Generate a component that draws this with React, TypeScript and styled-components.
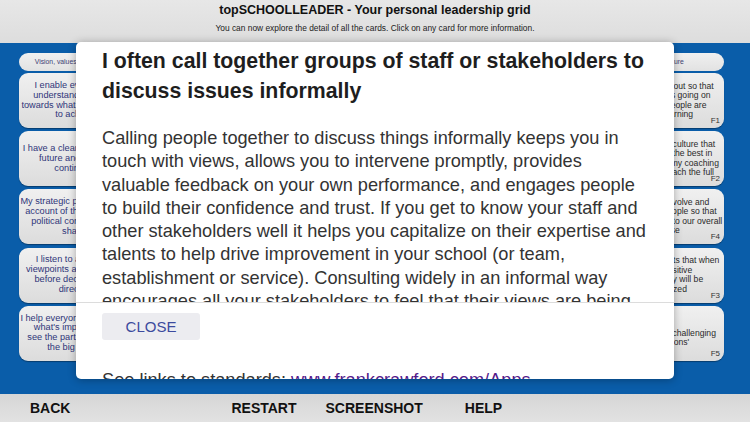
import React from "react"
import styled, { createGlobalStyle } from "styled-components"

type Card = { lines: string[]; code: string }
type Column = { title: string; align: "center" | "left"; cards: Card[] }

const columns: Column[] = [
  {
    title: "Vision, values and direction",
    align: "center",
    cards: [
      { code: "A1", lines: ["I enable everyone to", "understand and work", "towards what we are trying", "to achieve"] },
      { code: "A2", lines: ["I have a clear vision of the", "future and share it", "continually"] },
      { code: "A3", lines: ["My strategic planning takes", "account of the social and", "political context and is", "shared"] },
      { code: "A4", lines: ["I listen to a range of", "viewpoints and evidence", "before deciding on a", "direction"] },
      { code: "A5", lines: ["I help everyone understand", "what's important and", "see the part they play in", "the big picture"] },
    ],
  },
  {
    title: "Teaching and learning",
    align: "center",
    cards: [
      { code: "B1", lines: ["I keep learning at the", "heart of everything", "we do"] },
      { code: "B2", lines: ["I monitor the quality of", "teaching and give", "useful feedback"] },
      { code: "B3", lines: ["I use data to track", "progress and plan", "improvement"] },
      { code: "B4", lines: ["I model the behaviour", "I expect from others"] },
      { code: "B5", lines: ["I make time to visit", "classrooms and talk", "with learners"] },
    ],
  },
  {
    title: "Leading people",
    align: "center",
    cards: [
      { code: "C1", lines: ["I delegate clearly and", "trust people to get", "on with the job"] },
      { code: "C2", lines: ["I often call together", "groups of staff to", "discuss issues"] },
      { code: "C3", lines: ["I give praise and", "recognition where", "it is due"] },
      { code: "C4", lines: ["I deal with under-", "performance promptly", "and fairly"] },
      { code: "C5", lines: ["I build teams that", "work well together"] },
    ],
  },
  {
    title: "Managing the organisation",
    align: "center",
    cards: [
      { code: "D1", lines: ["I manage resources", "efficiently and", "effectively"] },
      { code: "D2", lines: ["I make sure systems", "and routines run", "smoothly"] },
      { code: "D3", lines: ["I plan ahead and", "anticipate problems"] },
      { code: "D4", lines: ["I keep the budget", "under close review"] },
      { code: "D5", lines: ["I make sure policies", "are understood and", "followed"] },
    ],
  },
  {
    title: "Working with others",
    align: "center",
    cards: [
      { code: "E1", lines: ["I work closely with", "parents and the", "community"] },
      { code: "E2", lines: ["I build strong links", "with other schools"] },
      { code: "E3", lines: ["I keep governors well", "informed"] },
      { code: "E4", lines: ["I represent the school", "positively in public"] },
      { code: "E5", lines: ["I seek out partners", "who can help us", "improve"] },
    ],
  },
  {
    title: "Our culture",
    align: "left",
    cards: [
      { code: "F1", lines: ["I get out and about so that", "I can see what's going on", "and how well people are", "working and learning"] },
      { code: "F2", lines: ["I build a strong culture that", "truly brings out the best in", "everyone, and my coaching", "helps staff to reach the full"] },
      { code: "F4", lines: ["I consistently involve and", "engage with people so that", "they contribute to our overall", "sense of purpose"] },
      { code: "F3", lines: ["I set clear targets that when", "they make a positive", "contribution they will be", "publicly recognized"] },
      { code: "F5", lines: ["I encourage", "staff to take on challenging", "ask 'hard questions'"] },
    ],
  },
]

const tools = [
  { label: "BACK", offset: 0 },
  { label: "RESTART", offset: 161 },
  { label: "SCREENSHOT", offset: 29 },
  { label: "HELP", offset: 42 },
]

const App = (): JSX.Element => {
  return (
    <>
      <GlobalStyle />
      <Screen>
        <Header>
          <AppTitle>topSCHOOLLEADER - Your personal leadership grid</AppTitle>
          <Hint>You can now explore the detail of all the cards. Click on any card for more information.</Hint>
        </Header>

        <Board>
          {columns.map((col) => (
            <CardColumn key={col.title}>
              <Pill>{col.title}</Pill>
              {col.cards.map((card) => (
                <CardBox key={card.code} $align={col.align}>
                  <CardText $align={col.align}>
                    {card.lines.map((line, i) => (
                      <React.Fragment key={i}>
                        {line}
                        {i < card.lines.length - 1 && <br />}
                      </React.Fragment>
                    ))}
                  </CardText>
                  <CardCode>{card.code}</CardCode>
                </CardBox>
              ))}
            </CardColumn>
          ))}
        </Board>

        <Toolbar>
          {tools.map((t) => (
            <ToolButton key={t.label} type="button" $offset={t.offset}>
              {t.label}
            </ToolButton>
          ))}
        </Toolbar>

        <Modal>
          <ModalScroll>
            <ModalTitle>I often call together groups of staff or stakeholders to discuss issues informally</ModalTitle>
            <ModalBody>
              Calling people together to discuss things informally keeps you in touch with views, allows
              you to intervene promptly, provides valuable feedback on your own performance, and engages
              people to build their confidence and trust. If you get to know your staff and other
              stakeholders well it helps you capitalize on their expertise and talents to help drive
              improvement in your school (or team, establishment or service). Consulting widely in an
              informal way encourages all your stakeholders to feel that their views are being
              listened to and valued.
            </ModalBody>
            <Links>
              See links to standards: <a href="#apps">www.frankcrawford.com/Apps</a>
            </Links>
          </ModalScroll>
          <ModalFooter>
            <CloseButton type="button">CLOSE</CloseButton>
          </ModalFooter>
        </Modal>
      </Screen>
    </>
  )
}

const GlobalStyle = createGlobalStyle`
  html, body {
    margin: 0;
    padding: 0;
  }
  body {
    font-family: "Liberation Sans", Arial, Helvetica, sans-serif;
    background: #0a5da9;
  }
`

const Screen = styled.div`
  position: relative;
  width: 750px;
  height: 422px;
  display: flex;
  flex-direction: column;
  overflow: hidden;
`

const Header = styled.header`
  height: 43px;
  flex-shrink: 0;
  display: flex;
  flex-direction: column;
  align-items: center;
  padding-top: 3px;
  box-sizing: border-box;
  background: linear-gradient(#e7e7e7, #dddddd);
`

const AppTitle = styled.h1`
  margin: 0;
  font-size: 12.5px;
  line-height: 15px;
  font-weight: 700;
  color: #111;
`

const Hint = styled.p`
  margin: 5px 0 0;
  font-size: 8.4px;
  line-height: 10px;
  color: #222;
`

const Board = styled.main`
  flex: 1;
  display: grid;
  grid-template-columns: repeat(6, minmax(0, 1fr));
  column-gap: 4px;
  align-content: start;
  padding: 10px 26px 0 19px;
  background: #0a5da9;
`

const CardColumn = styled.div`
  display: flex;
  flex-direction: column;
  gap: 3.2px;
  min-width: 0;
`

const Pill = styled.div`
  height: 17.5px;
  margin-bottom: -0.7px;
  border-radius: 9px;
  background: linear-gradient(#f0f0f0, #e2e2e2);
  display: flex;
  align-items: center;
  justify-content: center;
  font-size: 6.8px;
  color: #3e4274;
  white-space: nowrap;
  overflow: hidden;
`

const CardBox = styled.div<{ $align: "center" | "left" }>`
  position: relative;
  height: 55px;
  border-radius: 9px;
  background: linear-gradient(#f0f0f0, #dcdcdc);
  box-shadow: 0 1px 1px rgba(0, 0, 0, 0.35);
  display: flex;
  align-items: center;
  justify-content: ${(p) => (p.$align === "center" ? "center" : "flex-start")};
  padding: 0 4px;
  overflow: hidden;
`

const CardText = styled.p<{ $align: "center" | "left" }>`
  margin: 0;
  font-size: ${(p) => (p.$align === "center" ? "9.2px" : "8.6px")};
  line-height: ${(p) => (p.$align === "center" ? "9.8px" : "9.5px")};
  text-align: ${(p) => p.$align};
  color: ${(p) => (p.$align === "center" ? "#2f3579" : "#2a2a2a")};
  white-space: nowrap;
`

const CardCode = styled.span`
  position: absolute;
  right: 4px;
  bottom: 3px;
  font-size: 8px;
  color: #333;
`

const Toolbar = styled.nav`
  height: 28px;
  flex-shrink: 0;
  display: flex;
  align-items: center;
  padding-left: 30px;
  background: linear-gradient(#d6d6d6, #e2e2e2);
`

const ToolButton = styled.button<{ $offset: number }>`
  margin-left: ${(p) => p.$offset}px;
  padding: 0;
  border: none;
  background: none;
  font-family: inherit;
  font-size: 14px;
  font-weight: 700;
  color: #111;
`

const Modal = styled.section`
  position: absolute;
  left: 76px;
  top: 42px;
  width: 598px;
  height: 337px;
  border-radius: 5px;
  background: #fff;
  box-shadow: 0 1px 8px rgba(0, 0, 0, 0.3);
  overflow: hidden;
`

const ModalScroll = styled.div`
  padding: 4px 26px 0;
`

const ModalTitle = styled.h2`
  margin: 0;
  font-size: 21.3px;
  line-height: 30px;
  font-weight: 700;
  color: #1e1e1e;
`

const ModalBody = styled.p`
  margin: 21px 0 0;
  font-size: 18.2px;
  line-height: 23.3px;
  color: #333;
`

const Links = styled.p`
  margin: 32px 0 0;
  font-size: 18.2px;
  line-height: 23.3px;
  color: #333;

  a {
    color: #551a8b;
  }
`

const ModalFooter = styled.div`
  position: absolute;
  left: 0;
  right: 0;
  top: 260px;
  height: 62px;
  padding: 10px 26px 0;
  box-sizing: border-box;
  background: #fff;
  border-top: 1px solid #dcdcdc;
`

const CloseButton = styled.button`
  width: 98px;
  height: 27px;
  border: none;
  border-radius: 3px;
  background: #ececf0;
  font-family: inherit;
  font-size: 15px;
  color: #3c4a9e;
`

export default App
